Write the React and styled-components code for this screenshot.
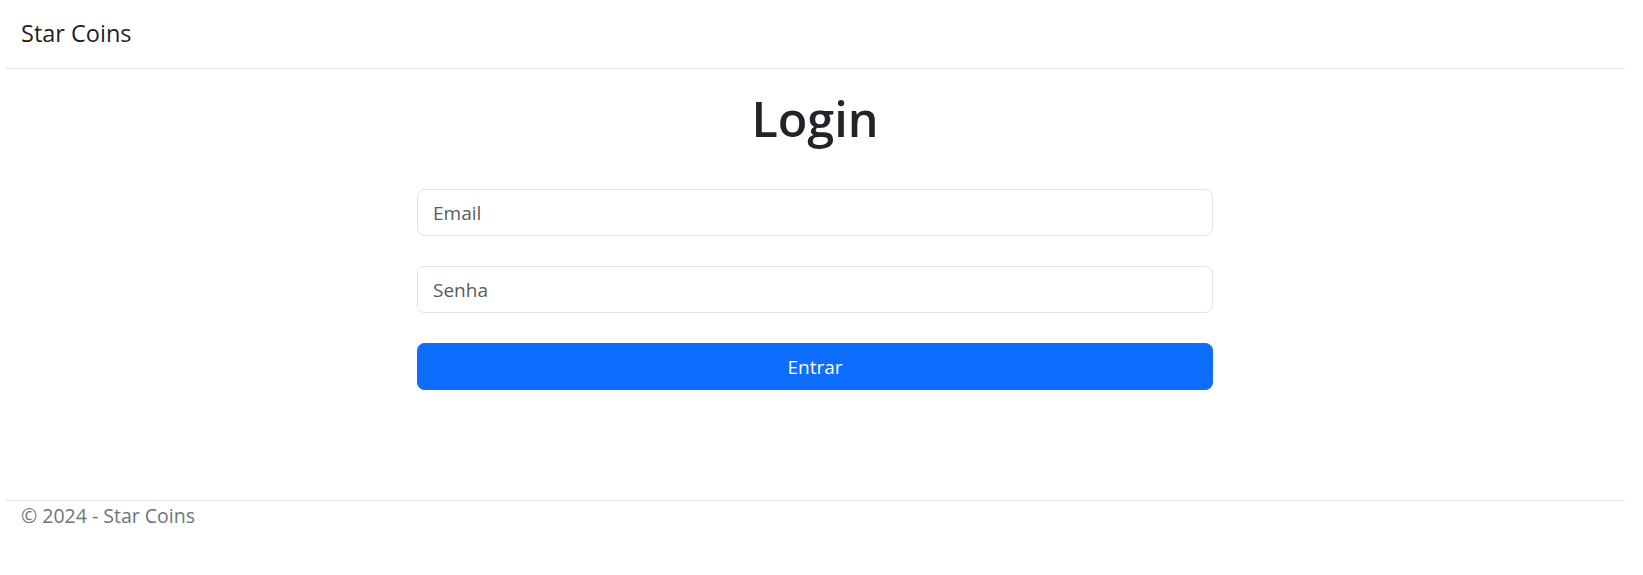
import React from "react";
import styled, { createGlobalStyle } from "styled-components";

const GlobalStyle = createGlobalStyle`
  html, body { margin: 0; padding: 0; background: #fff; }
  body {
    font-family: "Open Sans", "Noto Sans", "Liberation Sans", sans-serif;
    color: #212529;
  }
  * { box-sizing: border-box; }
`;

const Page = styled.div`
  width: 1643px;
  padding: 0 18px 0 5px;
  display: flex;
  flex-direction: column;
`;

const Header = styled.header`
  height: 69px;
  border-bottom: 1px solid #dee2e6;
  display: flex;
  align-items: center;
  padding: 0 0 1px 16px;
`;

const Brand = styled.a`
  font-size: 23.5px;
  line-height: 1.5;
  color: rgba(0, 0, 0, 0.9);
  text-decoration: none;
`;

const Main = styled.main`
  height: 431px;
  display: flex;
  flex-direction: column;
  align-items: center;
  padding: 19px 0 0;
`;

const Title = styled.h1`
  margin: 0 0 41px;
  font-size: 48.5px;
  font-weight: 600;
  line-height: 60px;
  color: #212529;
  text-align: center;
`;

const Form = styled.form`
  width: 796px;
  display: flex;
  flex-direction: column;
  gap: 30px;
`;

const Input = styled.input`
  height: 47px;
  width: 100%;
  padding: 0 15px;
  font-family: inherit;
  font-size: 19px;
  color: #212529;
  background: #fff;
  border: 1px solid #dee2e6;
  border-radius: 7.5px;
  outline: none;
  &::placeholder { color: #595c5f; opacity: 1; }
`;

const Button = styled.button`
  height: 47px;
  width: 100%;
  font-family: inherit;
  font-size: 19px;
  color: #fff;
  background: #0d6efd;
  border: 1px solid #0d6efd;
  border-radius: 7.5px;
  cursor: pointer;
`;

const Footer = styled.footer`
  border-top: 1px solid #dee2e6;
  padding: 0 0 0 16px;
  font-size: 19.5px;
  line-height: 30px;
  color: #6c757d;
`;

export default function App() {
  return (
    <>
      <GlobalStyle />
      <Page>
        <Header>
          <Brand href="#">Star Coins</Brand>
        </Header>
        <Main>
          <Title>Login</Title>
          <Form onSubmit={(e) => e.preventDefault()}>
            <Input type="email" placeholder="Email" />
            <Input type="password" placeholder="Senha" />
            <Button type="submit">Entrar</Button>
          </Form>
        </Main>
        <Footer>© 2024 - Star Coins</Footer>
      </Page>
    </>
  );
}
